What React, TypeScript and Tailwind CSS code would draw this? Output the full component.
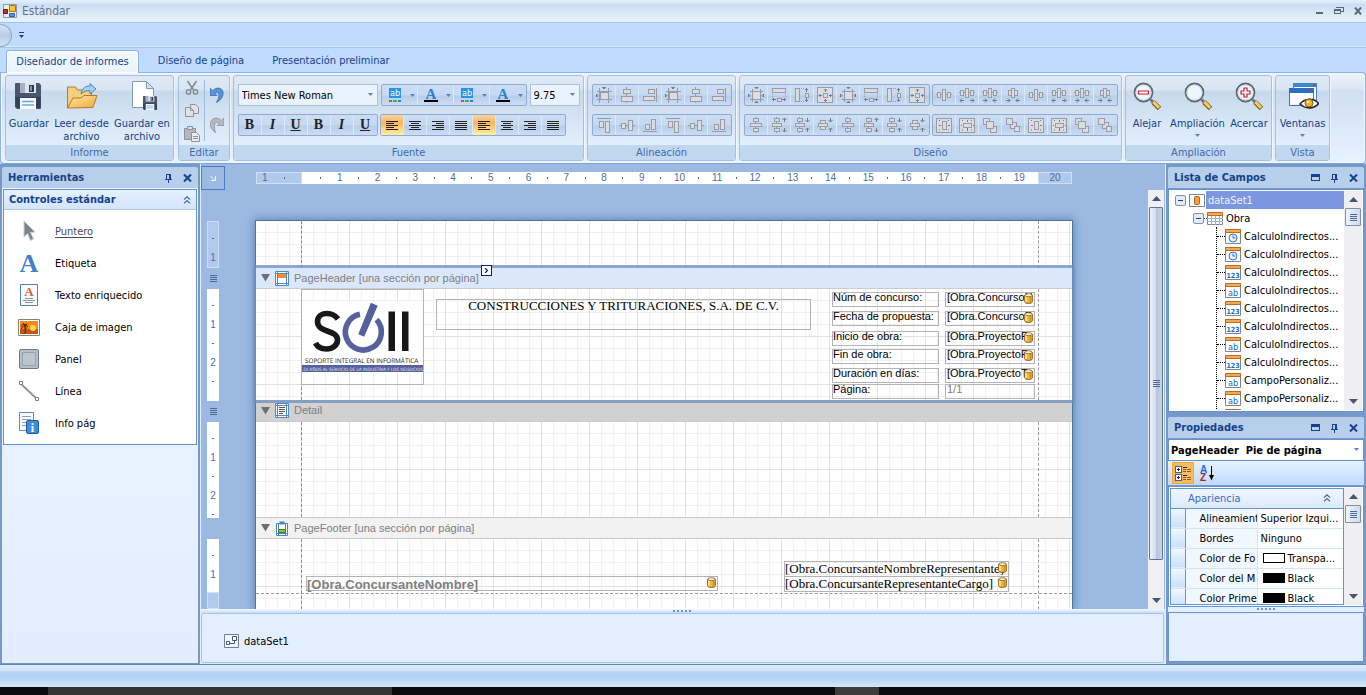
import type { PropsWithChildren, ReactNode } from "react";
import { clsx } from "clsx";

/* ---------- small glyphs ---------- */

function Caret({ className = "" }: { className?: string }) {
    return (
        <svg width="5" height="3" viewBox="0 0 5 3" className={className} aria-hidden="true">
            <path d="M0 0h5L2.5 3z" fill="#5b83bd" />
        </svg>
    );
}

function PinIcon() {
    return (
        <svg width="9" height="10" viewBox="0 0 9 10" shapeRendering="crispEdges" aria-hidden="true">
            <path d="M2 1h5M2.5 1v5M5.5 1v5M6.5 1v5M1 6h7M4.5 6v4" stroke="#15428b" fill="none" />
        </svg>
    );
}

function CloseIcon() {
    return (
        <svg width="9" height="8" viewBox="0 0 9 8" aria-hidden="true">
            <path d="M1 0.5l7 7M8 0.5l-7 7" stroke="#15428b" strokeWidth="2" />
        </svg>
    );
}

function MaximizeIcon() {
    return (
        <svg width="9" height="8" viewBox="0 0 9 8" shapeRendering="crispEdges" aria-hidden="true">
            <path d="M0.5 0.5h8v6h-8z" stroke="#15428b" fill="none" />
            <path d="M0 0h9v3H0z" fill="#15428b" />
        </svg>
    );
}

function ChevronsUp({ color = "#3668ae" }: { color?: string }) {
    return (
        <svg width="8" height="8" viewBox="0 0 8 8" fill="none" stroke={color} strokeWidth="1.2" aria-hidden="true">
            <path d="M1 3.6L4 .8l3 2.8M1 7.4l3-2.8 3 2.8" />
        </svg>
    );
}

function GripLines() {
    return (
        <svg width="7" height="7" viewBox="0 0 7 7" shapeRendering="crispEdges" aria-hidden="true">
            <path d="M0 .5h7M0 2.5h7M0 4.5h7M0 6.5h7" stroke="#4a6a9c" />
        </svg>
    );
}

function Database() {
    return (
        <svg width="9" height="11" viewBox="0 0 9 11" aria-hidden="true">
            <path d="M.7 2.2v6.6c0 .9 1.7 1.6 3.8 1.6s3.8-.7 3.8-1.6V2.2z" fill="#f0b73c" stroke="#8a5a12" />
            <path d="M2 3v6" stroke="#fff0b8" strokeWidth="1.4" />
            <path d="M6.4 3.4v6" stroke="#d98c10" strokeWidth="1.4" />
            <ellipse cx="4.5" cy="2.2" rx="3.6" ry="1.5" fill="#fff6d8" stroke="#8a5a12" strokeWidth=".8" />
        </svg>
    );
}

/* ---------- large ribbon icons ---------- */

function FloppyShape() {
    return (
        <g>
            <path d="M0 1a1 1 0 0 1 1-1h23l2 2v23a1 1 0 0 1-1 1H2l-2-2z" fill="#49566d" />
            <path d="M.5 14h25v11H2L.5 24z" fill="#35415a" />
            <path d="M5 0h16v10H5z" fill="#dfe5ee" />
            <path d="M5 0h5v10H5z" fill="#a7b1c2" />
            <path d="M14 2h5v7h-5z" fill="#2c364a" />
            <path d="M15 3h2v5h-2z" fill="#8793a8" />
            <path d="M5 15h16v11H5z" fill="#f6f9fc" />
            <path d="M7 18.5h12M7 22h12" stroke="#6fa4dc" strokeWidth="1.4" />
        </g>
    );
}

function FloppyIcon() {
    return (
        <svg width="32" height="32" viewBox="0 0 32 32" aria-hidden="true">
            <g transform="translate(2 3)"><FloppyShape /></g>
        </svg>
    );
}

function FolderOpenIcon() {
    return (
        <svg width="32" height="32" viewBox="0 0 32 32" aria-hidden="true">
            <defs>
                <linearGradient id="folderFront" x1="0" y1="0" x2="1" y2="1">
                    <stop offset="0" stopColor="#fde7a6" />
                    <stop offset="1" stopColor="#f0a93c" />
                </linearGradient>
            </defs>
            <path d="M1.500 27.500V7h8l2 3h14v6" fill="#f4cf7d" stroke="#b77a1d" />
            <path d="M1.500 28l5.500-10h8l3-2.500h13L27 27.500z" fill="url(#folderFront)" stroke="#b77a1d" strokeLinejoin="round" />
            <path d="M15 14c1-6 5-8.500 9.500-8l-.5-2.500 6 5.500-6 5-.2-3.200c-3.300-.4-6 .5-8.800 3.200z" fill="#a8d0ee" stroke="#4c87b6" strokeLinejoin="round" />
        </svg>
    );
}

function DocumentSaveIcon() {
    return (
        <svg width="32" height="32" viewBox="0 0 32 32" aria-hidden="true">
            <path d="M6.500 1.500h14l7 7v19h-21z" fill="#fff" stroke="#8197b4" />
            <path d="M20.500 1.500v7h7z" fill="#d5e0ee" stroke="#8197b4" strokeLinejoin="round" />
            <g transform="translate(17 16) scale(.54)"><FloppyShape /></g>
        </svg>
    );
}

function MagnifierIcon({ sign }: { sign?: "plus" | "minus" }) {
    return (
        <svg width="32" height="32" viewBox="0 0 32 32" aria-hidden="true">
            <path d="M19.500 19.500l4 4" stroke="#6b7684" strokeWidth="3" />
            <path d="M22 22l6.500 6.500" stroke="#7a6428" strokeWidth="5" />
            <path d="M22.300 21.900l5.800 5.800" stroke="#f5cf5c" strokeWidth="3" />
            <circle cx="12.500" cy="12.500" r="9" fill="#eef6fb" stroke="#5d6875" strokeWidth="1.800" />
            <circle cx="12.500" cy="12.500" r="7.500" fill="none" stroke="#c9dae6" />
            {sign && (
                <path
                    d={sign === "plus" ? "M11 8h3v3h3v3h-3v3h-3v-3H8v-3h3z" : "M7.500 11h10v3h-10z"}
                    fill="#fff"
                    stroke="#c41c2b"
                    strokeWidth="1.200"
                />
            )}
        </svg>
    );
}

function WindowsEyeIcon() {
    return (
        <svg width="32" height="32" viewBox="0 0 32 32" aria-hidden="true">
            <path d="M6.500 3.500h23v18h-23z" fill="#f6faff" stroke="#4383c7" />
            <path d="M6 3h24v4H6z" fill="#3d85cf" />
            <path d="M2.500 8.500h24v17h-24z" fill="#fbfdff" stroke="#3f74b5" />
            <path d="M2 8h25v5H2z" fill="#2a6fc2" />
            <path d="M26 4.500h2v2h-2zM22.500 9h2v2h-2z" fill="#e03030" />
            <path d="M13 24c5-6 14-6.500 18.500-.5-4.500 5.500-13 6-18.500.5z" fill="#fff" stroke="#22262e" strokeWidth="1.600" />
            <circle cx="22" cy="23" r="4" fill="#f3ad24" stroke="#8c5d10" />
            <circle cx="21" cy="22" r="1.300" fill="#fff4c9" />
        </svg>
    );
}

/* ---------- layout icons (disabled look, 16x16) ---------- */

type Box = [number, number, number, number];

const GREY = "#989ca4";

function LayoutGlyph({ boxes, lines, arrows }: { boxes: Box[]; lines?: string; arrows?: string }) {
    return (
        <svg width="16" height="16" viewBox="0 0 16 16" aria-hidden="true">
            {lines && <path d={lines} fill="none" stroke={GREY} shapeRendering="crispEdges" />}
            {boxes.map(([x, y, w, h], i) => (
                <rect
                    key={i}
                    x={x + 0.5}
                    y={y + 0.5}
                    width={w}
                    height={h}
                    fill="#dcdde0"
                    stroke={GREY}
                    shapeRendering="crispEdges"
                />
            ))}
            {arrows && <path d={arrows} fill="none" stroke="#74798a" />}
        </svg>
    );
}

const glyphs: Record<string, ReactNode> = {
    toGrid: (
        <LayoutGlyph
            lines="M3.500 1v15M12.500 1v15M1 4.500h15M1 12.500h15"
            boxes={[[4, 5, 8, 7]]}
            arrows="M6.500 .5h3l-1.500 1.500zM.5 7l1.500 1.500L.5 10z"
        />
    ),
    centerH: <LayoutGlyph lines="M7.500 0v16" boxes={[[4, 2, 7, 4], [2, 9, 11, 5]]} />,
    alignRight: <LayoutGlyph lines="M14.500 1v14" boxes={[[6, 2, 6, 4], [1, 9, 11, 4]]} />,
    alignTop: <LayoutGlyph lines="M1 1.500h14" boxes={[[3, 4, 4, 6], [9, 4, 4, 11]]} />,
    centerV: <LayoutGlyph lines="M0 8.500h16" boxes={[[2, 6, 4, 5], [9, 3, 4, 10]]} />,
    alignBottom: <LayoutGlyph lines="M1 14.500h14" boxes={[[3, 7, 4, 5], [9, 2, 4, 10]]} />,
    sizeToGrid: (
        <LayoutGlyph
            boxes={[[4, 4, 8, 8]]}
            lines="M4.500 2v2M12.500 2v2M4.500 13v2M12.500 13v2M2 4.500h2M13 4.500h2M2 12.500h2M13 12.500h2"
            arrows="M7 .5h3L8.500 2zM7 15.500h3L8.500 14zM.5 7v3L2 8.500zM15.500 7v3L14 8.500z"
        />
    ),
    sameWidth: <LayoutGlyph boxes={[[1, 1, 13, 4], [6, 11, 4, 3]]} lines="M1.500 7v1M14.500 7v1M1.500 9v1M14.500 9v1" arrows="M5 12.500H1.500M3 11l-1.500 1.500L3 14M11 12.500h3.500M13 11l1.500 1.500L13 14" />,
    sameHeight: <LayoutGlyph boxes={[[1, 1, 4, 13], [11, 6, 3, 4]]} lines="M7 1.500h1M9 1.500h1M7 14.500h1M9 14.500h1" arrows="M12.500 5V1.500M11 3l1.500-1.500L14 3M12.500 11v3.500M11 13l1.500 1.500L14 13" />,
    sameSize: (
        <LayoutGlyph
            boxes={[[0, 0, 15, 15], [6, 6, 4, 4]]}
            arrows="M8.500 5V2M7 3.500L8.500 2 10 3.500M8.500 12v2.500M7 13l1.500 1.500L10 13M5 8.500H2M3.500 7L2 8.500 3.500 10M12 8.500h2.500M13 7l1.500 1.500L13 10"
        />
    ),
    spaceH: <LayoutGlyph lines="M0 7.500h16" boxes={[[1, 5, 3, 5], [6, 2, 3, 11], [11, 5, 3, 5]]} />,
    spaceHMore: <LayoutGlyph lines="M0 5.500h16" boxes={[[1, 3, 3, 5], [6, 1, 3, 9], [11, 3, 3, 5]]} arrows="M5 13.500H1M3 11.500l-2 2 2 2M11 13.500h4M13 11.500l2 2-2 2" />,
    spaceHLess: <LayoutGlyph lines="M0 5.500h16" boxes={[[1, 3, 3, 5], [6, 1, 3, 9], [11, 3, 3, 5]]} arrows="M1 13.500h4M3 11.500l2 2-2 2M15 13.500h-4M13 11.500l-2 2 2 2" />,
    spaceHNone: <LayoutGlyph boxes={[[3, 3, 3, 5], [6, 1, 3, 9], [9, 3, 3, 5]]} arrows="M1 13.500h4M3 11.500l2 2-2 2M15 13.500h-4M13 11.500l-2 2 2 2" />,
    spaceV: <LayoutGlyph lines="M7.500 0v16" boxes={[[5, 1, 5, 3], [2, 6, 11, 3], [5, 11, 5, 3]]} />,
    spaceVMore: <LayoutGlyph lines="M5.500 0v16" boxes={[[3, 1, 5, 3], [1, 6, 9, 3], [3, 11, 5, 3]]} arrows="M13.500 5V1M11.500 3l2-2 2 2M13.500 11v4M11.500 13l2 2 2-2" />,
    spaceVLess: <LayoutGlyph lines="M5.500 0v16" boxes={[[3, 1, 5, 3], [1, 6, 9, 3], [3, 11, 5, 3]]} arrows="M13.500 1v4M11.500 3l2 2 2-2M13.500 15v-4M11.500 13l2-2 2 2" />,
    spaceVNone: <LayoutGlyph boxes={[[3, 3, 5, 3], [1, 6, 9, 3], [3, 9, 5, 3]]} arrows="M13.500 1v4M11.500 3l2 2 2-2M13.500 15v-4M11.500 13l2-2 2 2" />,
    formH: <LayoutGlyph boxes={[[0, 1, 15, 14], [6, 4, 4, 8]]} arrows="M3 8.500h2M12 8.500h2M3 3.500h1M12 3.500h1M3 13h1M12 13h1" />,
    formV: <LayoutGlyph boxes={[[0, 1, 15, 14], [4, 6, 8, 4]]} arrows="M2 8.500h1M14 8.500h1M8.500 3v2M8.500 11v3M3 3.500h1M12 3.500h1M3 13h1M12 13h1" />,
    toFront: <LayoutGlyph boxes={[[1, 1, 6, 6], [8, 9, 6, 6], [4, 4, 7, 7]]} />,
    toBack: <LayoutGlyph boxes={[[5, 5, 6, 6], [1, 1, 6, 6], [9, 9, 5, 5]]} />,
};

const repeatTwice = (items: string[][]) => [...items, ...items];

const alignTopRow = repeatTwice([["toGrid", "Alinear a la cuadrícula"], ["centerH", "Centrar"], ["alignRight", "Alinear a la derecha"]]);
const alignBottomRow = repeatTwice([["alignTop", "Alinear arriba"], ["centerV", "Alinear en medio"], ["alignBottom", "Alinear abajo"]]);
const sizeRow = repeatTwice([["sizeToGrid", "Ajustar a la cuadrícula"], ["sameWidth", "Igualar ancho"], ["sameHeight", "Igualar alto"], ["sameSize", "Igualar tamaño"]]);
const spaceHRow = repeatTwice([["spaceH", "Igualar espacio horizontal"], ["spaceHMore", "Aumentar espacio horizontal"], ["spaceHLess", "Reducir espacio horizontal"], ["spaceHNone", "Quitar espacio horizontal"]]);
const spaceVRow = repeatTwice([["spaceV", "Igualar espacio vertical"], ["spaceVMore", "Aumentar espacio vertical"], ["spaceVLess", "Reducir espacio vertical"], ["spaceVNone", "Quitar espacio vertical"]]);
const orderRow = repeatTwice([["formH", "Centrar horizontalmente"], ["formV", "Centrar verticalmente"], ["toFront", "Traer al frente"], ["toBack", "Enviar atrás"]]);

/* ---------- ribbon ---------- */

function RibbonGroup({ title, className, children }: PropsWithChildren<{ title: string; className?: string }>) {
    return (
        <section
            className={clsx(
                "flex shrink-0 flex-col overflow-hidden rounded-[3px] border border-[#a3c2e2] bg-[linear-gradient(#e0eaf6_0,#d9e5f3_14px,#c8d9ed_15px,#e2effc_69px)] shadow-[1px_1px_0_#eef5fd]",
                className,
            )}
        >
            <div className="flex flex-1 justify-center">{children}</div>
            <h2 className="h-[15px] bg-[#c1d8f0] text-center leading-[15px] text-[#3e6aaa]">{title}</h2>
        </section>
    );
}

function BigButton({ icon, label, menu, className }: { icon: ReactNode; label: string; menu?: boolean; className?: string }) {
    return (
        <button type="button" className={clsx("flex flex-col items-center pt-1 text-[#15428b]", className)}>
            {icon}
            <span className="mt-[5px] leading-[13px]">{label}</span>
            {menu && <Caret className="mt-1" />}
        </button>
    );
}

function Strip({ children }: PropsWithChildren) {
    return (
        <div className="flex h-[22px] rounded-[2px] border border-[#8faad3] bg-[linear-gradient(#cbddf4_0,#c6d9f1_10px,#b7cde9_11px,#cbddf5_20px)]">
            {children}
        </div>
    );
}

function StripButton({ label, active, wide, children }: PropsWithChildren<{ label: string; active?: boolean; wide?: boolean }>) {
    return (
        <button
            type="button"
            aria-label={label}
            className={clsx(
                "flex items-center justify-center border-r border-[#dbe8f8] last:border-r-0",
                wide ? "w-9 gap-2 pl-1" : "w-[23px]",
                active && "bg-[linear-gradient(#fbd4a0_0,#fdb45c_8px,#fdc978_12px,#fff0a5_20px)]",
            )}
        >
            {children}
        </button>
    );
}

function GlyphStrip({ items }: { items: string[][] }) {
    return (
        <Strip>
            {items.map(([glyph, label], i) => (
                <StripButton key={i} label={label}>{glyphs[glyph]}</StripButton>
            ))}
        </Strip>
    );
}

function Combo({ label, value, className }: { label: string; value: string; className?: string }) {
    return (
        <div className={clsx("relative h-[22px] border border-[#abc1de] bg-[#eaf2fb]", className)}>
            <select aria-label={label} className="h-full w-full appearance-none pl-[3px] text-black">
                <option>{value}</option>
            </select>
            <Caret className="absolute right-1 top-2" />
        </div>
    );
}

function HighlightIcon() {
    return (
        <svg width="14" height="16" viewBox="0 0 14 16" aria-hidden="true">
            <path d="M1 1h12v10H1z" fill="#2196ee" />
            <text x="7" y="9" textAnchor="middle" fontSize="9" fontFamily="DejaVu Sans Condensed, sans-serif" fill="#fff">ab</text>
            <path d="M1 13h3v2H1z" fill="#e8453c" />
            <path d="M5 13h4v2H5z" fill="#4fae3a" />
            <path d="M10 13h3v2h-3z" fill="#2b7de0" />
        </svg>
    );
}

function FontColorIcon() {
    return (
        <svg width="14" height="16" viewBox="0 0 14 16" aria-hidden="true">
            <text x="7" y="11.500" textAnchor="middle" fontSize="15" fontWeight="bold" fontFamily="Liberation Serif, serif" fill="#2c80d6">A</text>
            <path d="M0 13h14v2H0z" fill="#000" />
        </svg>
    );
}

const lineIcons: Record<string, string> = {
    left: "M0 1.500h12M0 3.500h8M0 5.500h12M0 7.500h8M0 9.500h12",
    center: "M0 1.500h12M2 3.500h8M0 5.500h12M2 7.500h8M0 9.500h12",
    right: "M0 1.500h12M4 3.500h8M0 5.500h12M4 7.500h8M0 9.500h12",
    justify: "M0 1.500h12M0 3.500h12M0 5.500h12M0 7.500h12M0 9.500h12",
};

function FontGroup() {
    return (
        <RibbonGroup title="Fuente" className="w-[351px]">
            <div className="flex flex-1 flex-col gap-2 px-1 pt-2">
                <div className="flex gap-[3px]">
                    <Combo label="Fuente" value="Times New Roman" className="w-[140px]" />
                    <Strip>
                        {["Resaltado", "Color de texto", "Resaltado 2", "Color de texto 2"].map((label, i) => (
                            <StripButton key={label} label={label} wide>
                                {i % 2 ? <FontColorIcon /> : <HighlightIcon />}
                                <Caret />
                            </StripButton>
                        ))}
                    </Strip>
                    <Combo label="Tamaño" value="9.75" className="w-[50px]" />
                </div>
                <div className="flex gap-0.5">
                    <Strip>
                        {["B", "I", "U", "B", "I", "U"].map((letter, i) => (
                            <StripButton key={i} label={letter}>
                                <span
                                    className={clsx(
                                        "font-['Liberation_Serif',serif] text-[14px] leading-4 font-bold text-[#222]",
                                        letter === "I" && "italic",
                                        letter === "U" && "underline",
                                    )}
                                >
                                    {letter}
                                </span>
                            </StripButton>
                        ))}
                    </Strip>
                    <Strip>
                        {["left", "center", "right", "justify", "left", "center", "right", "justify"].map((kind, i) => (
                            <StripButton key={i} label={kind} active={kind === "left"}>
                                <svg width="12" height="11" viewBox="0 0 12 11" shapeRendering="crispEdges" aria-hidden="true">
                                    <path d={lineIcons[kind]} stroke="#222" />
                                </svg>
                            </StripButton>
                        ))}
                    </Strip>
                </div>
            </div>
        </RibbonGroup>
    );
}

function EditGroup() {
    return (
        <RibbonGroup title="Editar" className="w-[52px]">
            <div className="flex w-6 flex-col items-center gap-[7px] pt-1">
                <button type="button" aria-label="Cortar">
                    <svg width="14" height="16" viewBox="0 0 16 16" fill="none" stroke="#858a92" aria-hidden="true">
                        <path d="M3 0l6.500 10M13 0L6.500 10" strokeWidth="1.800" />
                        <circle cx="4" cy="12.500" r="2.500" strokeWidth="1.600" />
                        <circle cx="12" cy="12.500" r="2.500" strokeWidth="1.600" />
                    </svg>
                </button>
                <button type="button" aria-label="Copiar">
                    <svg width="16" height="16" viewBox="0 0 16 16" fill="#e1e2e4" stroke="#8d929b" aria-hidden="true">
                        <path d="M6.500 1.500h5l3 3v6h-8z" />
                        <path d="M1.500 4.500h5l3 3v6h-8z" />
                        <path d="M6.500 4.500v3h3" fill="none" />
                    </svg>
                </button>
                <button type="button" aria-label="Pegar">
                    <svg width="16" height="16" viewBox="0 0 16 16" fill="#b4b7bc" stroke="#8d929b" aria-hidden="true">
                        <path d="M.5 2.500h11v11H.5z" />
                        <path d="M3.500 .5h5v3h-5z" fill="#dfe0e2" />
                        <path d="M7.500 6.500h5l3 3v6h-8z" fill="#ececee" />
                        <path d="M9 10.500h5M9 12.500h5" />
                    </svg>
                </button>
            </div>
            <div className="my-1 w-px bg-[#9ebbdf]" />
            <div className="flex w-6 flex-col items-center gap-3.5 pt-[11px]">
                <button type="button" aria-label="Deshacer">
                    <svg width="14" height="16" viewBox="0 0 14 16" aria-hidden="true">
                        <path d="M0 1v7.500h7L4.800 6.200C8.500 4 11 7 6.500 15.500 14 11.500 15.500 3 9.500 1.200 6.800.600 4.700 1.700 2.600 3.700z" fill="#5a94d8" stroke="#2c63aa" strokeWidth=".7" />
                    </svg>
                </button>
                <button type="button" aria-label="Rehacer">
                    <svg width="14" height="16" viewBox="0 0 14 16" aria-hidden="true">
                        <path d="M14 1v7.500H7l2.200-2.300C5.500 4 3 7 5.500 15.500-1 11.500-1.500 3 4.500 1.200c2.700-.6 4.800.5 6.900 2.500z" fill="#b4b8bf" stroke="#878c95" strokeWidth=".7" />
                    </svg>
                </button>
            </div>
        </RibbonGroup>
    );
}

function Ribbon() {
    return (
        <div className="flex h-[92px] shrink-0 gap-[3px] overflow-hidden rounded-b-[4px] rounded-tr-[4px] border border-[#8db2e3] border-b-[#7ca3d6] bg-[linear-gradient(#eef4fb_0,#dbe6f4_16px,#cfdff1_17px,#e7f2ff_88px)] py-0.5 pl-1 shadow-[inset_0_0_0_1px_#f0f7ff]">
            <RibbonGroup title="Informe" className="mr-px w-[169px]">
                <BigButton icon={<FloppyIcon />} label="Guardar" className="w-[46px]" />
                <BigButton icon={<FolderOpenIcon />} label="Leer desde archivo" className="w-[59px]" />
                <BigButton icon={<DocumentSaveIcon />} label="Guardar en archivo" className="w-[62px]" />
            </RibbonGroup>
            <EditGroup />
            <FontGroup />
            <RibbonGroup title="Alineación" className="w-[149px]">
                <div className="flex flex-col gap-2 pt-2">
                    <GlyphStrip items={alignTopRow} />
                    <GlyphStrip items={alignBottomRow} />
                </div>
            </RibbonGroup>
            <RibbonGroup title="Diseño" className="w-[383px]">
                <div className="flex flex-col gap-2 pt-2">
                    <div className="flex gap-0.5">
                        <GlyphStrip items={sizeRow} />
                        <GlyphStrip items={spaceHRow} />
                    </div>
                    <div className="flex gap-0.5">
                        <GlyphStrip items={spaceVRow} />
                        <GlyphStrip items={orderRow} />
                    </div>
                </div>
            </RibbonGroup>
            <RibbonGroup title="Ampliación" className="w-[147px]">
                <BigButton icon={<MagnifierIcon sign="minus" />} label="Alejar" className="w-[42px]" />
                <BigButton icon={<MagnifierIcon />} label="Ampliación" menu className="w-[59px]" />
                <BigButton icon={<MagnifierIcon sign="plus" />} label="Acercar" className="w-11" />
            </RibbonGroup>
            <RibbonGroup title="Vista" className="w-[55px]">
                <BigButton icon={<WindowsEyeIcon />} label="Ventanas" menu />
            </RibbonGroup>
        </div>
    );
}

function TitleBar() {
    return (
        <header className="shrink-0">
            <div className="flex h-[23px] items-center border-b border-[#9fc4ef] bg-[linear-gradient(#e4effb_0,#dbe8f8_3px,#cbdef4_4px,#dce9f7_14px,#e8f3fb_22px)] pl-[3px] pr-1">
                <svg width="14" height="14" viewBox="0 0 14 14" aria-hidden="true">
                    <path d="M.5 .5h13v13H.5z" fill="#e9edf2" stroke="#8f99a8" />
                    <path d="M6.500 1.500h6v6h-6z" fill="#f7c52c" stroke="#a5790c" />
                    <path d="M.5 5.500h4v4h-4z" fill="#c62f25" stroke="#7d150e" />
                    <path d="M6.500 9.500h5v3h-5z" fill="#5b93e6" stroke="#335fae" />
                </svg>
                <h1 className="ml-[5px] text-xs text-[#62718a]">Estándar</h1>
                <div className="ml-auto flex items-center gap-2.5 text-[#5b6878]">
                    <button type="button" aria-label="Minimizar">
                        <svg width="8" height="8" viewBox="0 0 8 8"><path d="M0 5h7v2H0z" fill="currentColor" /></svg>
                    </button>
                    <button type="button" aria-label="Restaurar">
                        <svg width="10" height="8" viewBox="0 0 10 8" fill="none" stroke="currentColor" shapeRendering="crispEdges">
                            <path d="M.5 2.500h6v4h-6zM2 .5h7.500v4H7M0 3.500h7" />
                        </svg>
                    </button>
                    <button type="button" aria-label="Cerrar">
                        <svg width="8" height="8" viewBox="0 0 8 8"><path d="M1 .5l6 7M7 .5l-6 7" stroke="currentColor" strokeWidth="2" /></svg>
                    </button>
                </div>
            </div>
            <div className="flex h-[25px] items-center border-b border-[#a3c7f3] bg-[#bfdbff] shadow-[inset_0_-1px_0_#d9eaff]">
                <div className="h-[23px] w-3 rounded-r-full border border-l-0 border-[#93abc9] bg-[linear-gradient(#d9e4f1,#b9cce4_50%,#d5e3f3)]" />
                <button type="button" aria-label="Personalizar barra" className="ml-[7px]">
                    <svg width="5" height="6" viewBox="0 0 5 6"><path d="M0 0h5v1H0zM0 3h5L2.500 6z" fill="#15428b" /></svg>
                </button>
            </div>
        </header>
    );
}

function RibbonTabs() {
    return (
        <nav className="flex h-6 shrink-0 items-end bg-[#bfdbff] pl-1.5 leading-5 text-[#15428b]">
            <button type="button" className="relative -mb-px h-[23px] w-[133px] rounded-t-[3px] border border-b-0 border-[#8db2e3] bg-[linear-gradient(#f4f9ff,#e9f2fc)] shadow-[inset_0_0_0_1px_#fff]">
                Diseñador de informes
            </button>
            <button type="button" className="h-[22px] w-[124px]">Diseño de página</button>
            <button type="button" className="h-[22px] w-[136px]">Presentación preliminar</button>
        </nav>
    );
}

/* ---------- docked panels ---------- */

function PanelHeader({ title, maximizable }: { title: string; maximizable?: boolean }) {
    return (
        <div className="flex h-[21px] shrink-0 items-center rounded-t-[2px] bg-[#b7cfea] pl-1.5 pr-1.5">
            <h2 className="flex-1 font-bold text-[#15428b]">{title}</h2>
            <div className="flex items-center gap-2.5">
                {maximizable && <button type="button" aria-label="Maximizar"><MaximizeIcon /></button>}
                <button type="button" aria-label="Fijar"><PinIcon /></button>
                <button type="button" aria-label="Cerrar panel"><CloseIcon /></button>
            </div>
        </div>
    );
}

const tools: { label: string; icon: ReactNode }[] = [
    {
        label: "Puntero",
        icon: <path d="M6 1l11 11-4.500.5 3 6.500-3 1.500-3-7L6 17z" fill="#7d838c" stroke="#c9ccd1" />,
    },
    {
        label: "Etiqueta",
        icon: <text x="11" y="19.500" textAnchor="middle" fontSize="26" fontWeight="bold" fontFamily="Liberation Serif, serif" fill="#3f82c9">A</text>,
    },
    {
        label: "Texto enriquecido",
        icon: (
            <>
                <path d="M2.500 .5h17v21h-17z" fill="#f8fbff" stroke="#4d86c2" />
                <text x="11" y="12" textAnchor="middle" fontSize="13" fontWeight="bold" fontFamily="Liberation Serif, serif" fill="#d9622b">A</text>
                <path d="M7 14.500h8M5 16.500h12M7 18.500h8" stroke="#8c96a3" />
            </>
        ),
    },
    {
        label: "Caja de imagen",
        icon: (
            <>
                <path d="M.5 3.500h21v16H.5z" fill="#fff" stroke="#8a8077" />
                <path d="M2 5h18v13H2z" fill="#f08a1c" />
                <path d="M2 13h18v5H2z" fill="#c9540f" />
                <circle cx="15" cy="12" r="3" fill="#ffd352" />
                <path d="M7 18c.5-4 0-6-.5-8M3 10c2-2 5-2 7 1M3.500 13c1-3 3-4 6-5M5 7c2 1 3 3 3 6" stroke="#4b1e06" fill="none" />
            </>
        ),
    },
    {
        label: "Panel",
        icon: (
            <>
                <rect x="1.500" y="1.500" width="19" height="19" rx="1.500" fill="#b7bfca" stroke="#6e7a89" />
                <path d="M4.500 4.500h13v13h-13z" fill="#bcc5d0" stroke="#97a2b0" />
            </>
        ),
    },
    {
        label: "Línea",
        icon: (
            <>
                <path d="M3 4l16 15" stroke="#8b929c" strokeWidth="1.800" />
                <path d="M1.500 1.500h3v3h-3zM17.500 17.500h3v3h-3z" fill="#fff" stroke="#7a818b" />
            </>
        ),
    },
    {
        label: "Info pág",
        icon: (
            <>
                <path d="M1.500 .5h14v18h-14z" fill="#f6f9fd" stroke="#5b8ac0" />
                <path d="M4 4.500h9M4 7.500h9M4 10.500h5M4 13.500h4" stroke="#8ba2bd" />
                <rect x="8.500" y="8.500" width="12" height="13" rx="1.500" fill="#3e8ddb" stroke="#1f5c9d" />
                <text x="14.500" y="19.500" textAnchor="middle" fontSize="12" fontWeight="bold" fontFamily="Liberation Serif, serif" fill="#fff">i</text>
            </>
        ),
    },
];

function Toolbox() {
    return (
        <aside className="flex w-[201px] shrink-0 flex-col border-r border-[#e3efff] bg-[#7699c9] py-px pl-0.5 pr-0.5 pt-[3px]">
            <PanelHeader title="Herramientas" />
            <div className="flex flex-1 flex-col bg-[linear-gradient(#f0f6ff,#e2eeff)] p-px">
                <div className="border border-[#6593cf] bg-white">
                    <div className="flex h-5 items-center border-b border-[#a9c8f0] bg-[linear-gradient(#e6f1ff,#d3e5fd)] px-[5px]">
                        <h3 className="flex-1 font-bold text-[#15428b]">Controles estándar</h3>
                        <button type="button" aria-label="Contraer"><ChevronsUp /></button>
                    </div>
                    <ul className="py-[5px]">
                        {tools.map(({ label, icon }) => (
                            <li key={label}>
                                <button type="button" className="flex h-8 w-full items-center gap-[15px] pl-3.5">
                                    <svg width="22" height="22" viewBox="0 0 22 22" className="overflow-visible" aria-hidden="true">{icon}</svg>
                                    <span className={clsx(label === "Puntero" && "text-[#4a4a4a] underline underline-offset-2")}>{label}</span>
                                </button>
                            </li>
                        ))}
                    </ul>
                </div>
            </div>
        </aside>
    );
}

function ScrollArrow({ down }: { down?: boolean }) {
    return (
        <button type="button" aria-label={down ? "Bajar" : "Subir"} className="flex h-[17px] w-full shrink-0 items-center justify-center">
            <svg width="9" height="5" viewBox="0 0 9 5" aria-hidden="true">
                <path d={down ? "M0 0h9L4.500 5z" : "M0 5h9L4.500 0z"} fill="#435679" />
            </svg>
        </button>
    );
}

function PanelScrollbar() {
    return (
        <div className="flex w-[18px] shrink-0 flex-col bg-[#efeff2]">
            <ScrollArrow />
            <button type="button" aria-label="Desplazar" className="mx-px flex h-[18px] shrink-0 items-center justify-center rounded-[1px] border border-[#8090ac] bg-[linear-gradient(90deg,#f0f4fa,#cfdaea)]">
                <GripLines />
            </button>
            <div className="flex-1" />
            <ScrollArrow down />
        </div>
    );
}

type FieldKind = "date" | "number" | "text";

const fields: [FieldKind, string][] = [
    ["date", "CalculoIndirectos..."],
    ["date", "CalculoIndirectos..."],
    ["number", "CalculoIndirectos..."],
    ["text", "CalculoIndirectos..."],
    ["number", "CalculoIndirectos..."],
    ["number", "CalculoIndirectos..."],
    ["text", "CalculoIndirectos..."],
    ["number", "CalculoIndirectos..."],
    ["text", "CampoPersonaliz..."],
    ["text", "CampoPersonaliz..."],
];

function FieldIcon({ kind }: { kind?: FieldKind }) {
    return (
        <svg width="16" height="15" viewBox="0 0 16 15" className="shrink-0" aria-hidden="true">
            <path d="M.5 .5h15v14H.5z" fill="#fff" stroke="#7186a6" />
            <path d="M.5 .5h15v3H.5z" fill="#f7a956" stroke="#c26a1c" />
            {kind === "date" && (
                <>
                    <circle cx="8" cy="9" r="4" fill="#e5f0fc" stroke="#3e74ba" />
                    <path d="M8 6.500V9h2.500" stroke="#3e74ba" fill="none" />
                </>
            )}
            {(kind === "text" || kind === "number") && (
                <text
                    x="8"
                    y="12.500"
                    textAnchor="middle"
                    fontSize={kind === "text" ? 9 : 7}
                    fontWeight={kind === "text" ? "normal" : "bold"}
                    fontFamily="DejaVu Sans Condensed, sans-serif"
                    fill="#2a66b5"
                >
                    {kind === "text" ? "ab" : "123"}
                </text>
            )}
        </svg>
    );
}

function Collapse() {
    return (
        <button type="button" aria-label="Contraer nodo" className="shrink-0">
            <svg width="11" height="11" viewBox="0 0 11 11" aria-hidden="true">
                <rect x=".5" y=".5" width="10" height="10" rx="1.500" fill="#e4ebf4" stroke="#7b93b8" />
                <path d="M3 5.500h5" stroke="#24406e" />
            </svg>
        </button>
    );
}

function FieldList() {
    return (
        <section className="flex min-h-0 flex-1 flex-col">
            <PanelHeader title="Lista de Campos" maximizable />
            <div className="mt-px flex min-h-0 flex-1 border border-[#6593cf] bg-white p-px">
                <ul className="min-w-0 flex-1 overflow-hidden">
                    <li>
                        <div className="flex h-[18px] items-center gap-[3px] pl-[5px]">
                            <Collapse />
                            <svg width="16" height="13" viewBox="0 0 16 13" aria-hidden="true">
                                <path d="M.5 .5h15v12H.5z" fill="#fff" stroke="#7186a6" />
                                <rect x="5.500" y="2.500" width="5" height="8" rx="1" fill="#f4a040" stroke="#b9631a" />
                            </svg>
                            <span className="-ml-0.5 flex h-[18px] flex-1 items-center bg-[#7b97e0] pl-0.5 text-[#eef3ff]">dataSet1</span>
                        </div>
                        <ul>
                            <li>
                                <div className="flex h-[18px] items-center pl-[23px]">
                                    <Collapse />
                                    <svg width="19" height="13" viewBox="0 0 19 13" aria-hidden="true">
                                        <path d="M0 6.500h3" stroke="#333" strokeDasharray="1 1" />
                                        <path d="M3.500 1.500h15v11h-15z" fill="#fff" stroke="#7186a6" />
                                        <path d="M3.500 .5h15v3h-15z" fill="#f7a956" stroke="#c26a1c" />
                                        <path d="M3 6.500h16M3 9.500h16M7.500 4v9M11.500 4v9M15.500 4v9" stroke="#9db0cb" />
                                    </svg>
                                    <span className="pl-[3px]">Obra</span>
                                </div>
                                <ul className="ml-[46px] border-l border-dotted border-black">
                                    {fields.map(([kind, name], i) => (
                                        <li key={i} className="flex h-[18px] items-center">
                                            <span className="w-2 border-t border-dotted border-black" />
                                            <FieldIcon kind={kind} />
                                            <span className="whitespace-nowrap pl-[3px]">{name}</span>
                                        </li>
                                    ))}
                                    <li className="flex h-[18px] items-center pl-2"><FieldIcon /></li>
                                </ul>
                            </li>
                        </ul>
                    </li>
                </ul>
                <PanelScrollbar />
            </div>
        </section>
    );
}

const properties = [
    { name: "Alineamient", value: "Superior Izqui..." },
    { name: "Bordes", value: "Ninguno" },
    { name: "Color de Fo", value: "Transpa...", swatch: "bg-white" },
    { name: "Color del M", value: "Black", swatch: "bg-black" },
    { name: "Color Prime", value: "Black", swatch: "bg-black" },
];

function PropertyGrid() {
    return (
        <section className="flex h-[245px] shrink-0 flex-col">
            <PanelHeader title="Propiedades" maximizable />
            <div className="relative mt-px h-[22px] shrink-0 border border-[#6593cf] bg-white">
                <select aria-label="Elemento" className="h-full w-full appearance-none pl-0.5 font-bold">
                    <option>PageHeader&nbsp; Pie de página</option>
                </select>
                <Caret className="absolute right-1 top-2" />
            </div>
            <div className="flex h-6 shrink-0 items-center gap-1.5 bg-[linear-gradient(#e8f2ff,#bfdaff)] pl-1">
                <button type="button" aria-label="Por categorías" className="flex h-[22px] w-[22px] items-center justify-center border border-[#f0a544] bg-[#fdb95e]">
                    <svg width="16" height="17" viewBox="0 0 16 17" shapeRendering="crispEdges" aria-hidden="true">
                        <path d="M.5 1.500h6v6h-6zM.5 9.500h6v6h-6z" fill="#fff" stroke="#2f63b0" />
                        <path d="M2 4.500h3M3.500 3v3M2 12.500h3M3.500 11v3" stroke="#16305e" />
                        <path d="M8 2.500h4M8 10.500h4" stroke="#222" />
                        <path d="M8 4.500h3M12 4.500h4M8 6.500h3M12 6.500h4M8 12.500h3M12 12.500h4M8 14.500h3M12 14.500h4" stroke="#7c5f35" />
                    </svg>
                </button>
                <button type="button" aria-label="Orden alfabético">
                    <svg width="15" height="17" viewBox="0 0 15 17" className="overflow-visible" aria-hidden="true">
                        <text x="0" y="8" fontSize="10" fontWeight="bold" fontFamily="Liberation Sans, sans-serif" fill="#1f6fd0">A</text>
                        <text x="0" y="16" fontSize="10" fontWeight="bold" fontFamily="Liberation Sans, sans-serif" fill="#b3202c">Z</text>
                        <path d="M11.500 1v10" stroke="#000" />
                        <path d="M9 10h5l-2.500 5.500z" fill="#000" />
                    </svg>
                </button>
            </div>
            <div className="mt-px flex min-h-0 flex-1 border border-[#6593cf] bg-white p-px">
                <div className="min-w-0 flex-1 overflow-hidden border border-[#6593cf]">
                    <table className="w-full table-fixed border-collapse text-left">
                        <colgroup>
                            <col className="w-3.5" />
                            <col className="w-[72px]" />
                            <col />
                        </colgroup>
                        <thead>
                            <tr className="h-[19px] bg-[linear-gradient(#eff6ff,#dceaff)]">
                                <th colSpan={3} className="border-b border-[#6593cf] pl-[17px] pr-3 font-normal text-[#3c6cb8]">
                                    <div className="flex items-center justify-between">
                                        Apariencia
                                        <button type="button" aria-label="Contraer categoría"><ChevronsUp /></button>
                                    </div>
                                </th>
                            </tr>
                        </thead>
                        <tbody>
                            {properties.map(({ name, value, swatch }) => (
                                <tr key={name} className="h-5">
                                    <td className="border-b border-r border-[#d5e4fa] border-r-[#6593cf] bg-[linear-gradient(#f2f8ff,#c9dffd)]" />
                                    <th scope="row" className="overflow-hidden whitespace-nowrap border-b border-r border-[#d5e4fa] bg-[#f0f7ff] pl-[14px] font-normal">
                                        {name}
                                    </th>
                                    <td className="overflow-hidden whitespace-nowrap border-b border-[#d5e4fa] pl-[3px]">
                                        <span className="flex items-center">
                                            {swatch && <span className={clsx("ml-0.5 mr-[3px] h-2.5 w-[22px] shrink-0 border border-black", swatch)} />}
                                            {value}
                                        </span>
                                    </td>
                                </tr>
                            ))}
                        </tbody>
                    </table>
                </div>
                <PanelScrollbar />
            </div>
            <div className="flex h-[5px] shrink-0 items-center justify-center bg-[#e3efff]">
                <SplitterDots />
            </div>
            <div className="h-[50px] shrink-0 border border-[#6593cf] bg-[#e3efff]" />
        </section>
    );
}

function SplitterDots() {
    return (
        <svg width="19" height="3" viewBox="0 0 19 3" shapeRendering="crispEdges" aria-hidden="true">
            <path d="M0 1h19" stroke="#6a93cc" strokeWidth="2" strokeDasharray="2 2" />
        </svg>
    );
}

/* ---------- designer surface ---------- */

const GRID =
    "bg-[linear-gradient(90deg,#e1e1e1_1px,transparent_1px),linear-gradient(#e1e1e1_1px,transparent_1px),linear-gradient(90deg,#f1f1f1_1px,transparent_1px),linear-gradient(#f1f1f1_1px,transparent_1px)] bg-[size:48px_48px,48px_48px,12px_12px,12px_12px] bg-[position:45px_-1px,45px_-1px,9px_-1px,9px_-1px]";

function RulerTick({ value }: { value: number | null }) {
    return value === null ? <span className="h-0.5 w-px bg-[#4a6ea5]" /> : <span>{value}</span>;
}

function HorizontalRuler() {
    const ticks = Array.from({ length: 38 }, (_, i) => (i % 2 ? (i + 1) / 2 : null));
    return (
        <div className="ml-[31px] mt-1.5 flex h-3 w-[816px] shrink-0 font-['Liberation_Sans',sans-serif] text-[10px] leading-3 text-[#4a6ea5]">
            <div className="flex w-[46px] items-center gap-4 border border-[#cfe0f6] bg-[#b0c9ed] pl-[5px]">
                <span>1</span>
                <RulerTick value={null} />
            </div>
            <div className="flex flex-1 items-center bg-white">
                <span className="flex-1" />
                {ticks.map((value, i) => (
                    <span key={i} className="flex w-0 flex-[2] justify-center"><RulerTick value={value} /></span>
                ))}
                <span className="flex-1" />
            </div>
            <div className="flex w-[34px] items-center justify-center border border-[#cfe0f6] bg-[#b0c9ed]">20</div>
        </div>
    );
}

function VerticalSegment({ ticks, muted, className }: { ticks: (number | null)[]; muted?: boolean; className?: string }) {
    return (
        <div
            className={clsx(
                "flex w-3 shrink-0 flex-col overflow-hidden",
                ticks.length > 0 && "pt-[7px]",
                muted ? "border border-[#cfe0f6] bg-[#b0c9ed]" : "bg-white",
                className,
            )}
        >
            {ticks.map((value, i) => (
                <span key={i} className="flex h-[19px] shrink-0 items-center justify-center">
                    {value === null ? <span className="h-px w-0.5 bg-[#4a6ea5]" /> : value}
                </span>
            ))}
        </div>
    );
}

function VerticalRuler() {
    return (
        <div className="ml-1.5 mt-[31px] flex w-3 shrink-0 flex-col font-['Liberation_Sans',sans-serif] text-[10px] leading-3 text-[#4a6ea5]">
            <VerticalSegment ticks={[null, 1]} muted className="h-[47px]" />
            <div className="flex h-[21px] shrink-0 items-center justify-center"><GripLines /></div>
            <VerticalSegment ticks={[null, 1, null, 2, null]} className="h-28" />
            <div className="flex h-[21px] shrink-0 items-center justify-center"><GripLines /></div>
            <VerticalSegment ticks={[null, 1, null, 2, null]} className="h-24" />
            <div className="h-[21px] shrink-0" />
            <VerticalSegment ticks={[null, 1]} className="h-[53px]" />
            <VerticalSegment ticks={[]} muted className="flex-1" />
        </div>
    );
}

function BandHeader({ title, icon, className }: { title: string; icon: ReactNode; className: string }) {
    return (
        <div className={clsx("flex shrink-0 items-center gap-[5px] pl-[5px] text-[#808080]", className)}>
            <svg width="9" height="8" viewBox="0 0 9 8" aria-hidden="true"><path d="M0 0h9L4.500 7.500z" fill="#6e6e6e" /></svg>
            <svg width="14" height="15" viewBox="0 0 14 15" className="shrink-0" aria-hidden="true">{icon}</svg>
            <h3 className="whitespace-nowrap">{title}</h3>
        </div>
    );
}

function BandBody({ className, children }: PropsWithChildren<{ className: string }>) {
    return (
        <div className={clsx("relative shrink-0 overflow-hidden border-t border-[#cccccc]", GRID, className)}>
            <PageMargins />
            {children}
        </div>
    );
}

function PageMargins() {
    return (
        <>
            <div className="absolute inset-y-0 left-[45px] border-l border-dashed border-[#888]" />
            <div className="absolute inset-y-0 right-[33px] border-l border-dashed border-[#999]" />
        </>
    );
}

/** A control placed freely on the report surface. */
function ReportField({ className, bound, children }: PropsWithChildren<{ className: string; bound?: boolean }>) {
    return (
        <div className={clsx("absolute whitespace-nowrap border border-[#b4b4b4]", className)}>
            {children}
            {bound && <span className="absolute right-px top-0"><Database /></span>}
        </div>
    );
}

const headerFields = [
    { label: "Núm de concurso:", value: "[Obra.ConcursoN", top: "top-[3px]", bound: true },
    { label: "Fecha de propuesta:", value: "[Obra.ConcursoF", top: "top-[22px]", bound: true },
    { label: "Inicio de obra:", value: "[Obra.ProyectoF", top: "top-[42px]", bound: true },
    { label: "Fin de obra:", value: "[Obra.ProyectoF", top: "top-[60px]", bound: true },
    { label: "Duración en días:", value: "[Obra.ProyectoT", top: "top-[79px]", bound: true },
    { label: "Página:", value: "1/1", top: "top-[95px]", bound: false },
];

function CompanyLogo() {
    return (
        <svg width="121" height="82" viewBox="0 0 121 82" role="img" aria-label="SOII Soporte integral en informática">
            <path d="M0 0h121v71H0z" fill="#fff" />
            <path d="M36 17c-3-4-7-5.500-11-5.500-6 0-9.500 3.500-9.500 8 0 12 20 7.500 20 18.500 0 5.500-5 9-11 9-5 0-9-2-11-6" fill="none" stroke="#181818" strokeWidth="5.600" />
            <path d="M58 12.300A18 18 0 1 0 74.500 17.700" fill="none" stroke="#55619f" strokeWidth="5.600" />
            <path d="M68.500 0l8 3.500L62.500 35.500l-7-3z" fill="#55619f" stroke="#fff" strokeWidth="1.200" />
            <path d="M86.500 9.500h6.500v39.500h-6.500zM100 9.500h6.500v39.500H100z" fill="#181818" />
            <text x="3" y="60.500" fontSize="6.400" textRendering="geometricPrecision" fontFamily="Open Sans, sans-serif" fill="#181818">SOPORTE INTEGRAL EN INFORMÁTICA</text>
            <path d="M0 63h121v7H0z" fill="#55619f" />
            <text x="1" y="68.500" fontSize="4.500" textRendering="geometricPrecision" fontFamily="Open Sans, sans-serif" fill="#eceef8">24 AÑOS AL SERVICIO DE LA INDUSTRIA Y LOS NEGOCIOS</text>
        </svg>
    );
}

const bandFrame = <path d="M.5 .5h13v14H.5zM.5 2.500h13M.5 12.500h13M2.500 .5v14M11.500 .5v14" fill="#fff" stroke="#5089c4" />;

function ReportPage() {
    return (
        <div className="mt-[30px] ml-9 flex w-[818px] shrink-0 flex-col border border-b-0 border-[#4d72a3] bg-white font-['Liberation_Sans',sans-serif] shadow-[0_0_9px_1px_#5f84b8]">
            <div className={clsx("relative h-[47px] shrink-0", GRID)}><PageMargins /></div>

            <section className="relative z-10 outline-[3px] outline-[#7391bb]/80">
                <BandHeader
                    title="PageHeader [una sección por página]"
                    className="h-5 bg-[#dbe8fb]"
                    icon={<>{bandFrame}<path d="M3 3h8v4H3z" fill="#f08a35" /></>}
                />
                <button type="button" aria-label="Tareas de PageHeader" className="absolute -top-[3px] left-[225px] flex h-[11px] w-[11px] items-center justify-center border border-[#0c1f78] bg-white">
                    <svg width="5" height="5" viewBox="0 0 5 5"><path d="M1 0l2.500 2.500L1 5" fill="none" stroke="#0c1f78" strokeWidth="1.200" /></svg>
                </button>
                <BandBody className="h-28">
                    <ReportField className="left-[45px] top-0 h-[96px] w-[123px] pt-3">
                        <CompanyLogo />
                    </ReportField>
                    <ReportField className="left-[180px] top-2.5 h-[31px] w-[375px] text-center font-['Liberation_Serif',serif] text-[13px] leading-3">
                        CONSTRUCCIONES Y TRITURACIONES, S.A. DE C.V.
                    </ReportField>
                    {headerFields.map(({ label, value, top, bound }) => (
                        <div key={label}>
                            <ReportField className={clsx("left-[576px] h-[15px] w-[107px] leading-[9px]", top)}>{label}</ReportField>
                            <ReportField bound={bound} className={clsx("left-[689px] h-[15px] w-[90px] pl-px leading-2", top, !bound && "text-[#808080]")}>
                                {value}
                            </ReportField>
                        </div>
                    ))}
                </BandBody>
            </section>

            <section className="flex shrink-0 flex-col">
                <BandHeader
                    title="Detail"
                    className="h-[21px] bg-[#d1d1d1]"
                    icon={<>{bandFrame}<path d="M4 4.500h6M4 6.500h6M4 8.500h6M4 10.500h4" stroke="#555" /></>}
                />
                <BandBody className="h-24" />
            </section>

            <section className="flex min-h-0 flex-1 flex-col">
                <BandHeader
                    title="PageFooter [una sección por página]"
                    className="h-[21px] border-t border-[#cccccc] bg-[#f2f2f2]"
                    icon={<><path d="M1.500 2.500h11v12h-11zM1.500 12.500h11M3.500 2v13M10.500 2v13" fill="#fff" stroke="#5089c4" /><path d="M4.500 .5h5v3h-5z" fill="#4b82be" /><path d="M3.500 8.500h7v3h-7z" fill="#86c540" stroke="#3f7d17" /></>}
                />
                <BandBody className="flex-1">
                    <div className="absolute inset-x-0 top-[54px] border-t border-dashed border-[#999]" />
                    <ReportField bound className="left-[50px] top-[37px] h-[15px] w-[412px] text-[13px] leading-[15px] font-bold text-[#808080]">
                        [Obra.ConcursanteNombre]
                    </ReportField>
                    <ReportField bound className="left-[528px] top-[22px] h-[16px] w-[225px] font-['Liberation_Serif',serif] text-[13px] leading-[14px]">
                        [Obra.ConcursanteNombreRepresentante]
                    </ReportField>
                    <ReportField bound className="left-[528px] top-[37px] h-[16px] w-[225px] font-['Liberation_Serif',serif] text-[13px] leading-[14px]">
                        [Obra.ConcursanteRepresentanteCargo]
                    </ReportField>
                </BandBody>
            </section>
        </div>
    );
}

function Designer() {
    return (
        <main className="flex min-w-0 flex-1 flex-col bg-[#9cbae1]">
            <div className="flex h-[26px] shrink-0 overflow-hidden pt-0.5">
                <button type="button" aria-label="Origen" className="flex h-6 w-6 shrink-0 items-center justify-center border border-[#4a7bc8] bg-[#9cbae1]">
                    <svg width="6" height="6" viewBox="0 0 6 6" fill="none" stroke="#f2f7ff"><path d="M0 .5l4 4M5.500 1v4.500H1" /></svg>
                </button>
                <HorizontalRuler />
            </div>
            <div className="flex min-h-0 flex-1">
                <div className="flex min-w-0 flex-1 overflow-hidden">
                    <VerticalRuler />
                    <ReportPage />
                </div>
                <div className="mr-px flex w-4 shrink-0 flex-col bg-[#f0f0f3]">
                    <ScrollArrow />
                    <button type="button" aria-label="Desplazar diseño" className="mx-px flex flex-[353] items-center justify-center rounded-[1px] border border-[#5d7297] bg-[linear-gradient(90deg,#eaf0f8,#d3dded_50%,#b3c4da_51%,#c9d6e8)]">
                        <GripLines />
                    </button>
                    <div className="flex-[32]" />
                    <ScrollArrow down />
                </div>
            </div>
            <div className="flex h-[55px] shrink-0 flex-col bg-[#dceaff] pb-px pr-px">
                <div className="flex h-1 items-center justify-center bg-[linear-gradient(#f4f9ff,#c5dcfb)]"><SplitterDots /></div>
                <div className="flex flex-1 items-center gap-[5px] rounded-[2px] border border-[#a5c5ee] bg-[#e3efff] pl-[22px] pt-1.5">
                    <svg width="15" height="14" viewBox="0 0 15 14" aria-hidden="true">
                        <path d="M.5 .5h14v13H.5z" fill="#f2f6fb" stroke="#6d7f9b" />
                        <path d="M2.500 7.500h3v3h-3zM8.500 2.500h4v4h-4z" fill="#fff" stroke="#3c5a8c" />
                        <path d="M6 9.500h4.500V7" fill="none" stroke="#3c5a8c" />
                    </svg>
                    <span>dataSet1</span>
                </div>
            </div>
        </main>
    );
}

export default function App() {
    return (
        <div className="flex h-screen flex-col overflow-hidden bg-[#bfdbff] font-['DejaVu_Sans_Condensed','DejaVu_Sans',sans-serif] text-[11px] leading-[13px] text-black">
            <TitleBar />
            <RibbonTabs />
            <Ribbon />
            <div className="flex min-h-0 flex-1">
                <Toolbox />
                <Designer />
                <aside className="flex w-[201px] shrink-0 flex-col gap-[5px] border-l border-[#e3efff] bg-[#7699c9] p-0.5 pt-[3px]">
                    <FieldList />
                    <PropertyGrid />
                </aside>
            </div>
            <div className="h-[23px] shrink-0 border-t border-[#5d86bd] bg-[linear-gradient(#dfedff_0,#cfe2fb_6px,#b3d0f5_7px,#b3d0f5_12px,#d6e7fc_22px)]" />
            <div className="flex h-2 shrink-0 bg-[#0a0b0d]">
                <div className="ml-12 w-[344px] bg-[#333]" />
                <div className="ml-[443px] w-11 bg-[#3d3d3d]" />
            </div>
        </div>
    );
}
